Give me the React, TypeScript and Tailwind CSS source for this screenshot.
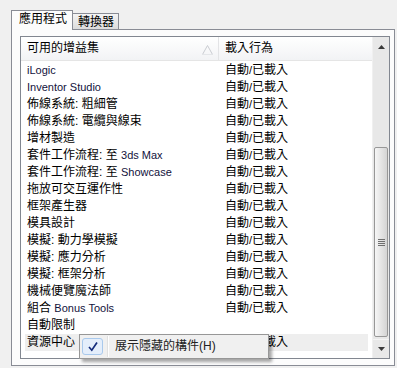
import type { ReactNode } from 'react';

interface AddinRow {
  name: string;
  load: boolean;
  selected?: boolean;
}

const rows: AddinRow[] = [
  { name: 'iLogic', load: true },
  { name: 'Inventor Studio', load: true },
  { name: '佈線系統: 粗細管', load: true },
  { name: '佈線系統: 電纜與線束', load: true },
  { name: '增材製造', load: true },
  { name: '套件工作流程: 至 3ds Max', load: true },
  { name: '套件工作流程: 至 Showcase', load: true },
  { name: '拖放可交互運作性', load: true },
  { name: '框架產生器', load: true },
  { name: '模具設計', load: true },
  { name: '模擬: 動力學模擬', load: true },
  { name: '模擬: 應力分析', load: true },
  { name: '模擬: 框架分析', load: true },
  { name: '機械便覽魔法師', load: true },
  { name: '組合 Bonus Tools', load: true },
  { name: '自動限制', load: false },
  { name: '資源中心', load: true, selected: true },
];

// latin runs get the smaller Tahoma-like size
function renderName(text: string): ReactNode[] {
  return text.split(/([A-Za-z0-9][A-Za-z0-9 ]*)/g).map((part, i) =>
    /^[A-Za-z0-9]/.test(part) ? (
      <span key={i} className="text-[11px] text-[#12123c]">
        {part}
      </span>
    ) : (
      <span key={i}>{part}</span>
    ),
  );
}

function Arrow({ down }: { down?: boolean }) {
  return (
    <svg width="7" height="4" viewBox="0 0 7 4" aria-hidden="true">
      <polygon points={down ? '0,0 7,0 3.5,4' : '0,4 7,4 3.5,0'} fill="#3a3a3a" />
    </svg>
  );
}

export default function App() {
  return (
    <div className="relative w-[397px] h-[368px] bg-[#f0f0f0] pt-[10px] pl-[11px] pr-[2px] pb-[2px] flex flex-col text-[12px] text-black font-['Liberation_Sans','Noto_Sans_CJK_TC',sans-serif]">
      {/* tabs */}
      <div className="h-[19px] flex items-end shrink-0">
        <div className="relative z-10 -mb-px h-[20px] w-[62px] border border-b-0 border-[#898c95] bg-[#fcfcfc] pl-[7px] leading-[17px]">
          應用程式
        </div>
        <div className="h-[16px] w-[46px] border border-b-0 border-l-0 border-[#898c95] bg-gradient-to-b from-[#f4f4f4] to-[#dcdcdc] pl-[5px] leading-[16px]">
          轉換器
        </div>
      </div>

      {/* tab panel */}
      <div className="flex-1 flex border border-[#898c95] bg-[#fcfcfc] pt-[6px] pl-[8px] pr-[4px] pb-[6px]">
        <div className="flex-1 flex border border-[#828790] bg-white">
          <div className="flex-1 flex flex-col">
            {/* header */}
            <div className="h-[24px] flex border-b border-[#e5e5e5] bg-gradient-to-b from-white to-[#f2f3f5]">
              <div className="relative w-[198px] pl-[6px] pt-[3px] leading-[17px] border-r border-[#e3e4e6]">
                可用的增益集
                <svg className="absolute left-[181px] top-[8px]" width="11" height="10" viewBox="0 0 11 10" aria-hidden="true">
                  <polyline points="0.5,9.5 5.5,0.5 10.5,9.5" fill="none" stroke="#c9ccd1" strokeWidth="1" />
                  <line x1="0.5" y1="9.5" x2="10.5" y2="9.5" stroke="#e4e6e9" strokeWidth="1" />
                </svg>
              </div>
              <div className="pl-[6px] pt-[3px] leading-[17px]">載入行為</div>
            </div>

            {/* rows */}
            <div className="pt-[1px] px-[4px] flex flex-col">
              {rows.map((row) => (
                <div
                  key={row.name}
                  className={[
                    'h-[17px] flex items-center leading-[17px] whitespace-nowrap',
                    row.selected ? 'bg-[#eeeeee]' : '',
                  ].join(' ')}
                >
                  <div className="w-[194px] pl-[2px]">{renderName(row.name)}</div>
                  <div className="pl-[6px]">
                    {row.load ? (
                      <>
                        自動<span className="text-[11px]">/</span>已載入
                      </>
                    ) : null}
                  </div>
                </div>
              ))}
            </div>
          </div>

          {/* scrollbar */}
          <div className="w-[17px] flex flex-col bg-[#e8e8e8] border-l border-[#f0f0f0]">
            <div className="h-[17px] flex items-center justify-center pt-[2px]">
              <Arrow />
            </div>
            <div className="h-[93px]" />
            <div className="h-[190px] mx-[1px] rounded-[2px] border border-[#979797] bg-gradient-to-r from-[#f6f6f6] to-[#d4d4d4] flex flex-col items-center justify-center gap-[1px]">
              <div className="w-[7px] h-px bg-[#6f6f6f]" />
              <div className="w-[7px] h-px bg-[#6f6f6f]" />
              <div className="w-[7px] h-px bg-[#6f6f6f]" />
              <div className="w-[7px] h-px bg-[#6f6f6f]" />
            </div>
            <div className="flex-1 flex items-end">
              <div className="h-[19px] w-full flex items-center justify-center border-t border-[#f4f4f4]">
                <Arrow down />
              </div>
            </div>
          </div>
        </div>
      </div>

      {/* context menu */}
      <div className="absolute left-[79px] top-[334px] w-[190px] h-[25px] border border-[#979797] bg-[#f0f0f0] shadow-[3px_3px_3px_rgba(0,0,0,0.35)] flex items-center">
        <div className="ml-[2px] w-[21px] h-[17px] rounded-[3px] border border-[#a9c9ec] bg-[#e4eefb] flex items-center justify-center">
          <svg width="12" height="11" viewBox="0 0 12 11" aria-hidden="true">
            <path d="M2 6 L4.8 9.2 L10 1.5" fill="none" stroke="#142c7c" strokeWidth="1.7" />
          </svg>
        </div>
        <div className="ml-[4px] h-[21px] w-[2px] border-l border-[#e0e0e0] bg-white" />
        <div className="ml-[6px] text-[#222] leading-[17px]">展示隱藏的構件(H)</div>
      </div>
    </div>
  );
}
